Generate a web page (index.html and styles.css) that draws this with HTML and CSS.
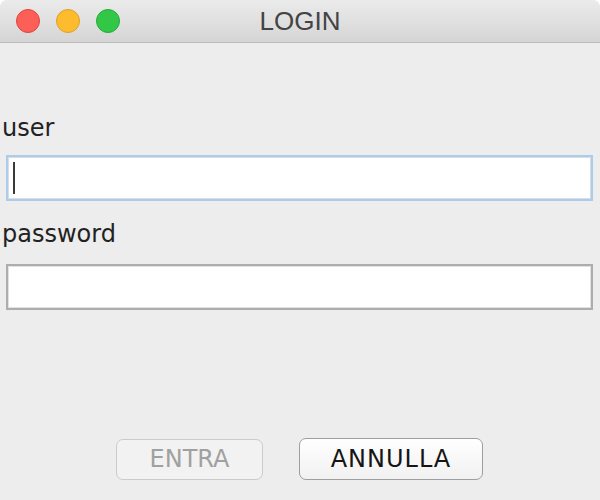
FILE: index.html
```html
<!DOCTYPE html>
<html lang="it">
<head>
<meta charset="utf-8">
<title>LOGIN</title>
<link rel="stylesheet" href="styles.css">
</head>
<body>
<div class="window">
  <header class="titlebar">
    <div class="lights">
      <span class="light close"></span>
      <span class="light minimize"></span>
      <span class="light zoom"></span>
    </div>
    <h1 class="title">LOGIN</h1>
    <div class="spacer"></div>
  </header>
  <main class="form">
    <label class="label">user</label>
    <div class="field focused"><span class="caret"></span></div>
    <label class="label label-second">password</label>
    <div class="field"></div>
    <div class="actions">
      <button class="btn btn-disabled" type="button">ENTRA</button>
      <button class="btn btn-default" type="button">ANNULLA</button>
    </div>
  </main>
</div>
</body>
</html>
```
FILE: styles.css
```css
html, body {
  margin: 0;
  padding: 0;
  background: #ffffff;
}

.window {
  width: 600px;
  height: 500px;
  background: #ededed;
  border-radius: 7px 7px 0 0;
  overflow: hidden;
  display: flex;
  flex-direction: column;
}

.titlebar {
  height: 42px;
  flex: 0 0 42px;
  border-bottom: 1px solid #bcbcbc;
  background: linear-gradient(#ebebeb, #d5d5d5);
  display: grid;
  grid-template-columns: 1fr auto 1fr;
  align-items: center;
}

.lights {
  display: flex;
  gap: 16px;
  padding-left: 16px;
}

.light {
  width: 24px;
  height: 24px;
  border-radius: 50%;
  box-sizing: border-box;
}

.close { background: #fc5f57; border: 1px solid #e0443e; }
.minimize { background: #fdbc2e; border: 1px solid #dea123; }
.zoom { background: #33c748; border: 1px solid #27aa35; }

.title {
  margin: 0;
  font-family: "Liberation Sans", Arial, sans-serif;
  font-weight: normal;
  font-size: 26px;
  color: #444444;
  line-height: 30px;
}

.form {
  flex: 1;
  display: flex;
  flex-direction: column;
  padding: 70px 7px 20px 2px;
  font-family: "DejaVu Sans", Verdana, sans-serif;
}

.label {
  font-size: 24px;
  line-height: 30px;
  color: #222222;
  height: 30px;
}

.label-second {
  margin-top: 18px;
}

.field {
  margin-top: 12px;
  margin-left: 4px;
  height: 46px;
  box-sizing: border-box;
  background: #ffffff;
  border: 2px solid #adadad;
  box-shadow: inset 0 0 0 1px #e2e2e2;
  display: flex;
  align-items: center;
  padding-left: 5px;
}

.label-second + .field {
  margin-top: 15px;
}

.field.focused {
  border-color: #a9cdef;
  box-shadow: inset 0 0 0 1px #dcdcdc;
}

.caret {
  width: 2px;
  height: 32px;
  background: #3a3a3a;
}

.actions {
  margin-top: auto;
  margin-left: 4px;
  display: flex;
  justify-content: center;
  align-items: center;
  gap: 36px;
}

.btn {
  font-family: "DejaVu Sans", Verdana, sans-serif;
  font-size: 24px;
  height: 41px;
  border-radius: 7px;
  padding: 0;
  box-sizing: border-box;
}

.btn-disabled {
  width: 147px;
  color: #a0a0a0;
  background: #f2f2f2;
  border: 1.5px solid #cbcbcb;
}

.btn-default {
  width: 184px;
  height: 42px;
  color: #151515;
  letter-spacing: 1px;
  background: linear-gradient(#ffffff, #f1f1f1);
  border: 1.5px solid #9e9e9e;
}
```
